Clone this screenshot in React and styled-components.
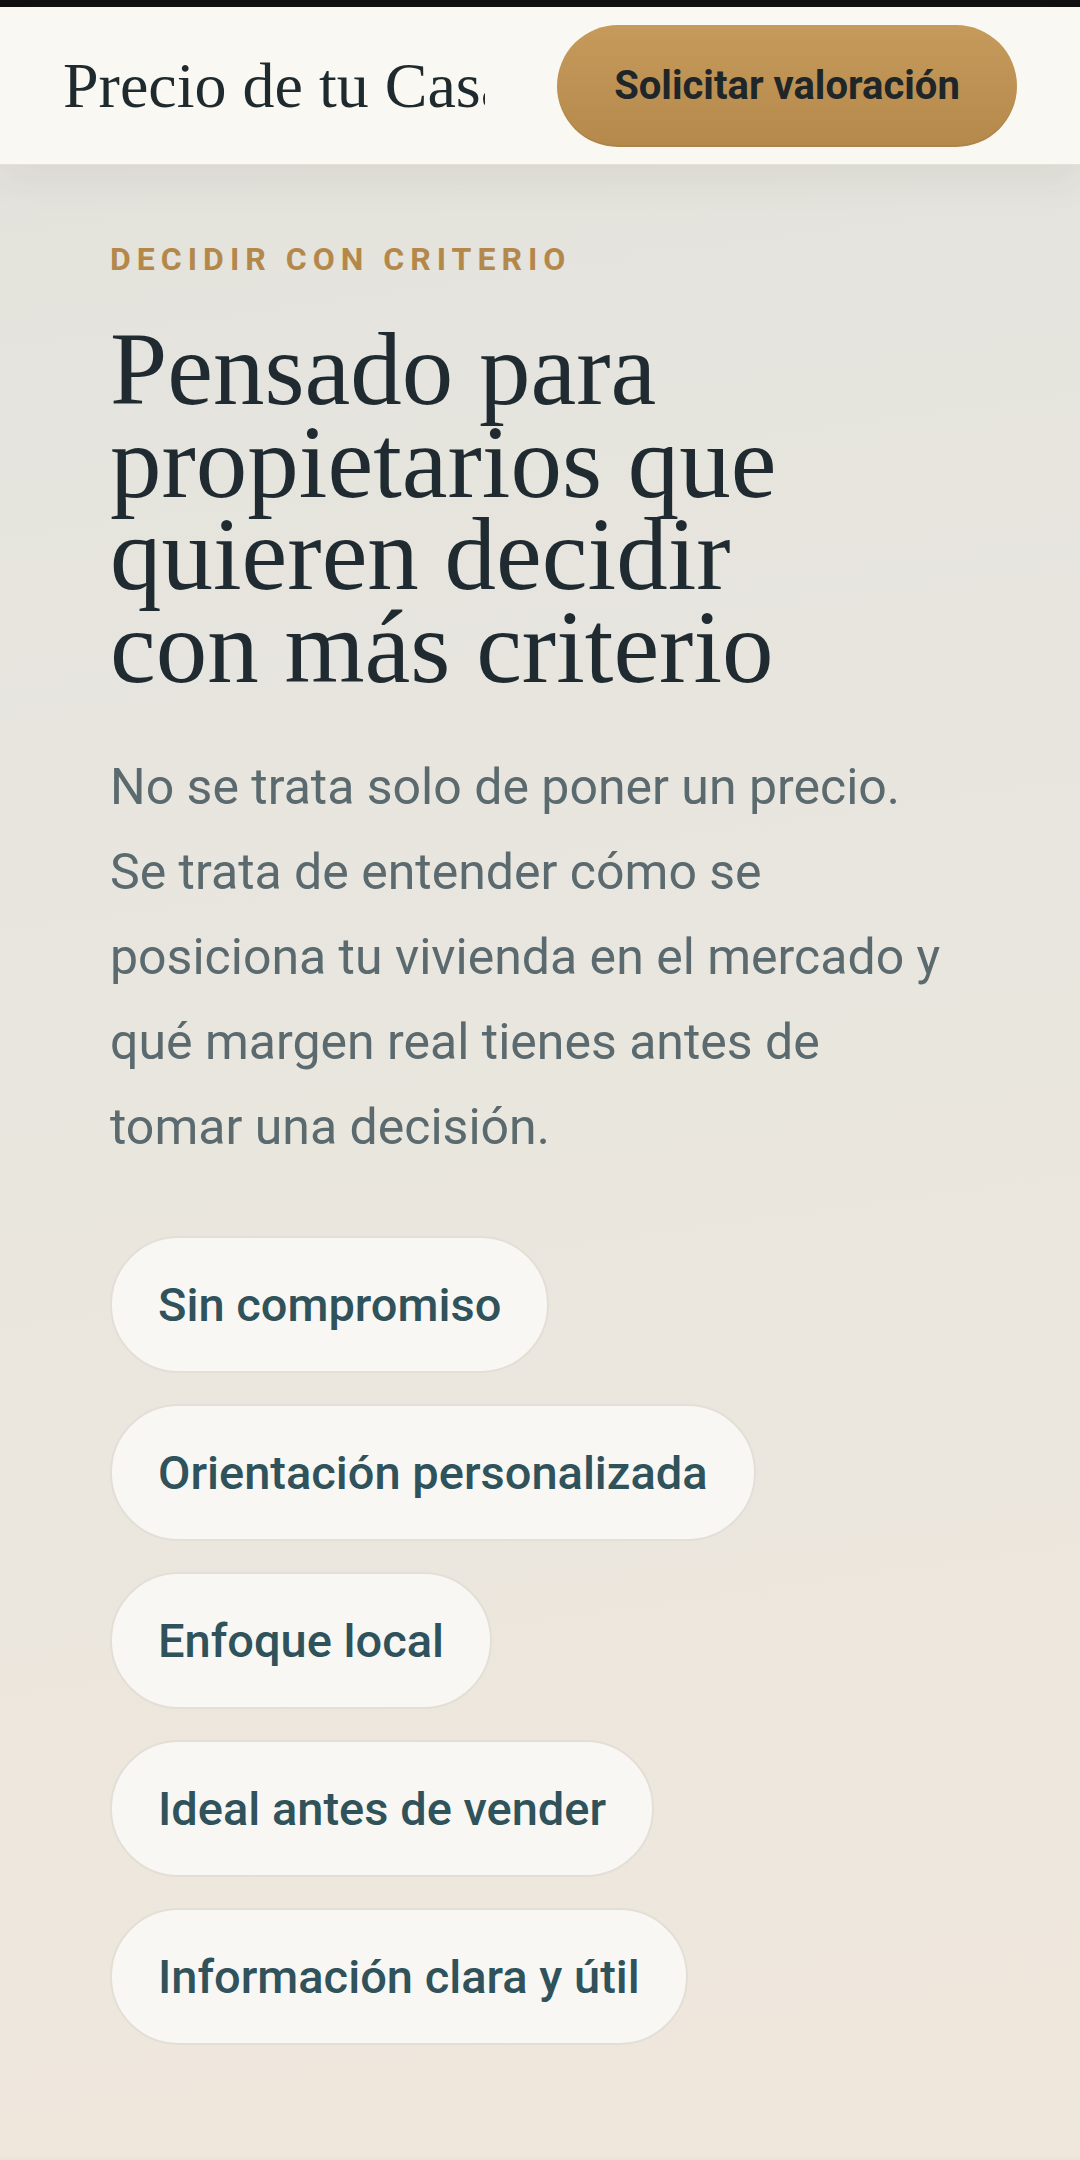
import React from 'react';
import styled, { createGlobalStyle } from 'styled-components';

const GlobalStyle = createGlobalStyle`
  html, body {
    margin: 0;
    padding: 0;
  }
  body {
    background: #ece8df;
    font-family: Roboto, "Noto Sans", sans-serif;
  }
  * {
    box-sizing: border-box;
  }
`;

const Page = styled.div`
  min-height: 2160px;
  display: flex;
  flex-direction: column;
  background: linear-gradient(172deg, #e2e2dc 0%, #e9e6df 45%, #efe7dc 100%);
`;

const StatusBar = styled.div`
  height: 7px;
  background: #111111;
`;

const Header = styled.header`
  position: relative;
  z-index: 1;
  height: 158px;
  display: flex;
  align-items: center;
  gap: 72px;
  padding: 0 63px;
  background: #faf8f2;
  border-bottom: 1px solid #e4e1d9;
  box-shadow: 0 12px 40px rgba(60, 60, 50, 0.07);
`;

const Logo = styled.div`
  flex: 1;
  min-width: 0;
  overflow: hidden;
  white-space: nowrap;
  font-family: "Liberation Serif", serif;
  font-size: 64px;
  color: #1f2a2e;
`;

const CtaButton = styled.button`
  flex: none;
  width: 460px;
  height: 122px;
  border: none;
  border-radius: 61px;
  background: linear-gradient(180deg, #c69a5b 0%, #b4894b 100%);
  box-shadow: inset 0 -2px 0 rgba(0, 0, 0, 0.04);
  font-family: Roboto, sans-serif;
  font-size: 40px;
  font-weight: 700;
  color: #1e2629;
  cursor: pointer;
`;

const Main = styled.main`
  flex: 1;
  display: flex;
  flex-direction: column;
  align-items: flex-start;
  padding: 75px 110px 110px;
`;

const Eyebrow = styled.div`
  font-size: 32px;
  line-height: 38px;
  font-weight: 700;
  letter-spacing: 6px;
  color: #b3884a;
  text-transform: uppercase;
`;

const Title = styled.h1`
  margin: 45px 0 0;
  max-width: 740px;
  font-family: "Liberation Serif", serif;
  font-weight: 400;
  font-size: 103px;
  line-height: 92.5px;
  color: #1f2b31;
`;

const Lead = styled.p`
  margin: 52px 0 0;
  max-width: 842px;
  font-size: 50px;
  line-height: 85px;
  color: #5b6a6e;
`;

const PillList = styled.ul`
  list-style: none;
  margin: 66px 0 0;
  padding: 0;
  display: flex;
  flex-direction: column;
  align-items: flex-start;
  gap: 31px;
`;

const Pill = styled.li`
  display: inline-flex;
  align-items: center;
  height: 137px;
  padding: 0 46px;
  border-radius: 999px;
  background: #f8f7f3;
  border: 2px solid #e3dfd6;
  font-size: 47px;
  font-weight: 500;
  color: #2f525b;
  white-space: nowrap;
`;

const BottomEdge = styled.div`
  height: 16px;
  background: linear-gradient(180deg, rgba(0, 0, 0, 0) 0%, rgba(60, 50, 30, 0.08) 100%);
`;

const features = [
  'Sin compromiso',
  'Orientación personalizada',
  'Enfoque local',
  'Ideal antes de vender',
  'Información clara y útil',
];

export default function App() {
  return (
    <>
      <GlobalStyle />
      <Page>
        <StatusBar />
        <Header>
          <Logo>Precio de tu Casa</Logo>
          <CtaButton>Solicitar valoración</CtaButton>
        </Header>
        <Main>
          <Eyebrow>Decidir con criterio</Eyebrow>
          <Title>Pensado para propietarios que quieren decidir con más criterio</Title>
          <Lead>
            No se trata solo de poner un precio.<br />
            Se trata de entender cómo se posiciona tu vivienda en el mercado y qué margen real
            tienes antes de tomar una decisión.
          </Lead>
          <PillList>
            {features.map((f) => (
              <Pill key={f}>{f}</Pill>
            ))}
          </PillList>
        </Main>
        <BottomEdge />
      </Page>
    </>
  );
}
